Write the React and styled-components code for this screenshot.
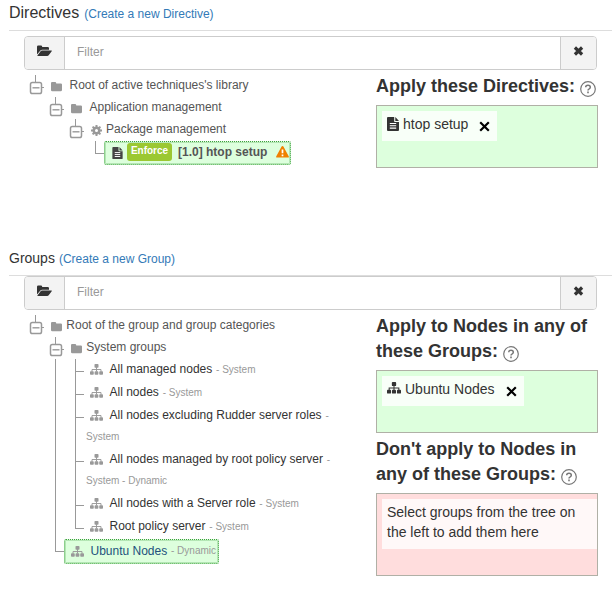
import React from 'react';
import styled, { createGlobalStyle, css } from 'styled-components';

const GlobalStyle = createGlobalStyle`
  * { box-sizing: border-box; }
  body {
    margin: 0;
    background: #fff;
    color: #333;
    font-family: "Liberation Sans", Arial, sans-serif;
    font-size: 12px;
    overflow: hidden;
  }
`;

const Page = styled.main`
  width: 612px;
  height: 589px;
  overflow: hidden;
`;

const Section = styled.section`
  height: ${(p) => p.$height}px;
`;

const SectionHeader = styled.header`
  display: flex;
  align-items: baseline;
  gap: ${(p) => p.$gap}px;
  height: 31px;
  margin-left: 9px;
  padding-top: 4px;
  border-bottom: 1px solid #ddd;
`;

const SectionTitle = styled.h3`
  margin: 0;
  font-size: ${(p) => p.$size}px;
  line-height: 18px;
  font-weight: 400;
`;

const CreateLink = styled.a`
  color: #337ab7;
  font-size: 12px;
  line-height: 18px;
`;

const FilterBar = styled.div`
  display: flex;
  width: 573px;
  height: 34px;
  margin: ${(p) => p.$top}px 0 0 24px;
  border: 1px solid #ccc;
  border-radius: 4px;
  overflow: hidden;
`;

const FilterButton = styled.button`
  display: flex;
  align-items: center;
  justify-content: center;
  width: ${(p) => p.$width}px;
  padding: 0 0 4px;
  border: 0;
  background: #f3f3f3;
  color: #333;
`;

const FilterInput = styled.input`
  flex: 1;
  min-width: 0;
  padding: 0 12px 3px;
  border: solid #ccc;
  border-width: 0 1px;
  font: 12px "Liberation Sans", Arial, sans-serif;
  &::placeholder { color: #999; opacity: 1; }
`;

const Columns = styled.div`
  display: grid;
  grid-template-columns: 351px 222px;
  margin-left: 25px;
`;

const Tree = styled.div`
  display: flex;
  flex-direction: column;
  padding-top: 5px;
`;

const TreeRow = styled.div`
  display: flex;
  height: ${(p) => p.$height || 22}px;
`;

const vertical = 'linear-gradient(#999, #999) 10px 0 / 1px';
const tick = 'linear-gradient(#999, #999) 10px 12px / 9px 1px no-repeat';

const Guide = styled.span`
  flex: none;
  width: ${(p) => p.$width || 20}px;
  ${(p) => p.$kind === 'line' && css`background: ${vertical} 100% no-repeat;`}
  ${(p) => p.$kind === 'tee' && css`background: ${tick}, ${vertical} 100% no-repeat;`}
  ${(p) => p.$kind === 'corner' && css`background: ${tick}, ${vertical} 12px no-repeat;`}
  ${(p) => p.$kind === 'elbow' && css`
    background: linear-gradient(#999, #999) 10px 12px / 10px 1px no-repeat,
      ${vertical} 12px no-repeat;
  `}
`;

const Toggle = styled.span`
  display: flex;
  flex: none;
  width: 20px;
`;

const FolderLabel = styled.span`
  display: flex;
  align-items: center;
  height: 20px;
  color: #555;
  white-space: pre;
`;

const IconSlot = styled.span`
  display: flex;
  flex: none;
  align-items: center;
  width: ${(p) => p.$width}px;
  padding: ${(p) => p.$top || 0}px 0 0 ${(p) => p.$left || 0}px;
  color: ${(p) => p.$color || '#999'};
`;

const GroupLabel = styled.div`
  padding-left: 1px;
  line-height: 21px;
  white-space: nowrap;
`;

const GroupLine = styled.div`
  display: flex;
  align-items: center;
  height: 21px;
`;

const GroupType = styled.span`
  margin-left: ${(p) => (p.$inline ? 1 : 0)}px;
  color: #999;
  font-size: 10px;
  white-space: pre;
`;

const Selected = styled.div`
  display: flex;
  align-items: center;
  width: ${(p) => p.$width}px;
  height: ${(p) => p.$height}px;
  padding-bottom: 2px;
  border: 1px dotted #3f9f3f;
  border-radius: 2px;
  background: #dfd;
  box-shadow: inset 0 0 0 1px #b4e6b4;
  white-space: pre;
`;

const PolicyBadge = styled.span`
  flex: none;
  width: 45px;
  height: 18px;
  margin-right: 6px;
  border-radius: 3px;
  background: #9bc832;
  color: #fff;
  font-size: 10px;
  font-weight: 700;
  line-height: 15px;
  text-align: center;
`;

const DirectiveName = styled.b`
  flex: none;
  width: 97.5px;
  color: #555;
`;

const GroupName = styled.span`
  color: #23527c;
`;

const Targets = styled.aside`
  padding-top: 4px;
`;

const TargetTitle = styled.h4`
  margin: ${(p) => p.$top || 0}px 0 6px;
  font-size: 18px;
  line-height: 25px;
  white-space: nowrap;
`;

const TitleLine = styled.span`
  display: flex;
  height: 25px;
  gap: 5px;
`;

const HelpSlot = styled.span`
  display: flex;
  padding-top: 7px;
`;

const DropArea = styled.div`
  height: ${(p) => p.$height}px;
  padding: 5px 0 0 5px;
  border: 1px solid #b0b0a6;
  background: ${(p) => (p.$excluded ? '#fdd' : '#dfd')};
`;

const Chip = styled.div`
  display: flex;
  width: ${(p) => p.$width}px;
  height: 30px;
  padding: 3px 5px;
  background: rgba(255, 255, 255, 0.8);
  font-size: 14px;
  line-height: 20px;
`;

const ChipName = styled.span`
  flex: 1;
  white-space: nowrap;
`;

const ChipIcon = styled.span`
  display: flex;
  flex: none;
  width: ${(p) => p.$width}px;
  padding-top: ${(p) => p.$top || 3}px;
`;

const RemoveButton = styled.span`
  display: flex;
  padding: 7px 2px 0 0;
`;

const EmptyHint = styled.p`
  height: 50px;
  margin: 0;
  padding: 3px 5px;
  background: rgba(255, 255, 255, 0.8);
  font-size: 14px;
  line-height: 20px;
`;

const FolderOpenIcon = () => (
  <svg width="15" height="12" viewBox="0 0 15 12" fill="currentColor">
    <path d="M0 9.5V1.7Q0 .5 1.2.5H4q1 0 1.2 1.2v.3h5.6Q12 2 12 3.3v1.4H5.1q-1 0-1.7.8L0 9.5Z" />
    <path d="M5 5.5h9.3q1 0 .4.8l-3 4q-.6.8-1.5.8H1q-1 0-.4-.8l3-4q.6-.8 1.4-.8Z" />
  </svg>
);

const CrossIcon = () => (
  <svg width="11" height="10" viewBox="0 0 11 10">
    <path d="M1.9 1.5 9.1 8.5M9.1 1.5 1.9 8.5" stroke="currentColor" strokeWidth="3.2" />
  </svg>
);

const FolderIcon = () => (
  <svg width="11" height="10" viewBox="0 0 11 10" fill="currentColor">
    <path d="M1.1 0h3q1 0 1.1 1v.4h4.600Q11 1.400 11 2.600v5.200Q11 9.300 9.700 9.300H1.300Q0 9.300 0 8V1.100Q0 0 1.100 0Z" />
  </svg>
);

const ToggleIcon = () => (
  <svg width="20" height="22" viewBox="0 0 20 22" fill="none" stroke="#999">
    <path d="M10.5 0v7M17 12.5h2" />
    <rect x="5.500" y="7.500" width="11" height="11" rx="1.800" strokeWidth="1.500" />
    <path d="M7.500 12.800h7" strokeWidth="1.400" />
  </svg>
);

const GearIcon = () => (
  <svg width="11" height="11" viewBox="0 0 22 22" fill="none" stroke="currentColor">
    <circle cx="11" cy="11" r="5.5" strokeWidth="5" />
    <path
      d="M11 0v4M11 18v4M0 11h4M18 11h4M3.2 3.2l3 3M15.8 15.8l3 3M18.8 3.2l-3 3M6.2 15.8l-3 3"
      strokeWidth="4"
    />
  </svg>
);

const SitemapIcon = ({ size = 13 }) => (
  <svg width={size} height={size * 0.85} viewBox="0 0 26 22" fill="currentColor">
    <rect x="9" y="0" width="8" height="7.5" rx="1.6" />
    <rect x="0" y="14.5" width="7.5" height="7" rx="1.6" />
    <rect x="9.2" y="14.5" width="7.5" height="7" rx="1.6" />
    <rect x="18.5" y="14.5" width="7.5" height="7" rx="1.6" />
    <path d="M13 6v9M4 15v-4h18v4" fill="none" stroke="currentColor" strokeWidth="1.9" />
  </svg>
);

const FileIcon = ({ width, height }) => (
  <svg width={width} height={height} viewBox="0 0 12 14">
    <path
      d="M1 0h6.200v4.200q0 .9.9.9H12V13q0 1-1 1H1q-1 0-1-1V1q0-1 1-1ZM8.300 0 12 4H8.300Z"
      fill="currentColor"
    />
    <path d="M2.800 6.500h6.400M2.800 8.800h6.400M2.800 11.100h6.400" stroke="#fff" strokeWidth="1.100" />
  </svg>
);

const WarningIcon = () => (
  <svg width="13" height="12" viewBox="0 0 13 12">
    <path d="M6.5 0q.6 0 .9.6l5.3 9.7q.6 1.2-.7 1.3H1Q-.3 11.5.3 10.3L5.6.6Q5.9 0 6.5 0Z" fill="#f08000" />
    <path d="M6.5 3.5v3.8M6.5 8.5v1.7" stroke="#fff" strokeWidth="1.7" />
  </svg>
);

const HelpIcon = () => (
  <svg width="16" height="16" viewBox="0 0 16 16" fill="none" stroke="#777">
    <circle cx="8" cy="8" r="7.3" strokeWidth="1.2" />
    <path d="M5.7 6.3Q5.7 4.3 8 4.3T10.3 6.2Q10.3 7.2 9.2 7.8Q8 8.4 8 9.4" strokeWidth="1.5" />
    <path d="M8 10.5v1.7" strokeWidth="1.6" />
  </svg>
);

const RemoveIcon = () => (
  <svg width="11" height="11" viewBox="0 0 11 11">
    <path d="M1.2 1.2 9.8 9.8M9.8 1.2 1.2 9.8" stroke="#000" strokeWidth="2.2" />
  </svg>
);

function Filter({ top }) {
  return (
    <FilterBar $top={top}>
      <FilterButton $width={39} aria-label="Open all"><FolderOpenIcon /></FilterButton>
      <FilterInput placeholder="Filter" />
      <FilterButton $width={35} aria-label="Clear filter"><CrossIcon /></FilterButton>
    </FilterBar>
  );
}

function Folder({ depth, label, gap = 18.5, icon = <FolderIcon /> }) {
  return (
    <TreeRow>
      {Array.from({ length: depth }, (_, i) => <Guide key={i} />)}
      <Toggle><ToggleIcon /></Toggle>
      <FolderLabel>
        <IconSlot $width={gap + 6} $left={5.5} $top={3}>{icon}</IconSlot>
        {label}
      </FolderLabel>
    </TreeRow>
  );
}

function Group({ name, type, wrapped, last }) {
  return (
    <TreeRow $height={wrapped ? 44 : 23}>
      <Guide />
      <Guide $kind="line" />
      <Guide $kind={last ? 'corner' : 'tee'} />
      <GroupLabel>
        <GroupLine>
          <IconSlot $width={23.5} $left={4} $top={1}><SitemapIcon /></IconSlot>
          {name}
          <GroupType $inline>{wrapped ? ' -' : ` - ${type}`}</GroupType>
        </GroupLine>
        {wrapped && <GroupLine><GroupType>{type}</GroupType></GroupLine>}
      </GroupLabel>
    </TreeRow>
  );
}

function Help() {
  return <HelpSlot><HelpIcon /></HelpSlot>;
}

const groups = [
  { name: 'All managed nodes', type: 'System' },
  { name: 'All nodes', type: 'System' },
  { name: 'All nodes excluding Rudder server roles', type: 'System', wrapped: true },
  { name: 'All nodes managed by root policy server', type: 'System - Dynamic', wrapped: true },
  { name: 'All nodes with a Server role', type: 'System' },
  { name: 'Root policy server', type: 'System', last: true },
];

export default function App() {
  return (
    <Page>
      <GlobalStyle />
      <Section $height={245}>
        <SectionHeader $gap={5}>
          <SectionTitle $size={16}>Directives</SectionTitle>
          <CreateLink>(Create a new Directive)</CreateLink>
        </SectionHeader>
        <Filter top={5} />
        <Columns>
          <Tree>
            <Folder depth={0} label="Root of active techniques's library" />
            <Folder depth={1} label="Application management" />
            <Folder depth={2} label="Package management" gap={15} icon={<GearIcon />} />
            <TreeRow $height={25}>
              <Guide /><Guide /><Guide />
              <Guide $kind="elbow" $width={19} />
              <Selected $width={187} $height={24}>
                <IconSlot $width={22} $left={7} $top={2} $color="#444"><FileIcon width={11} height={12} /></IconSlot>
                <PolicyBadge>Enforce</PolicyBadge>
                <DirectiveName>[1.0] htop setup</DirectiveName>
                <WarningIcon />
              </Selected>
            </TreeRow>
          </Tree>
          <Targets>
            <TargetTitle>
              <TitleLine>Apply these Directives:<Help /></TitleLine>
            </TargetTitle>
            <DropArea $height={63}>
              <Chip $width={115}>
                <ChipIcon $width={16}><FileIcon width={12} height={14} /></ChipIcon>
                <ChipName>htop setup</ChipName>
                <RemoveButton><RemoveIcon /></RemoveButton>
              </Chip>
            </DropArea>
          </Targets>
        </Columns>
      </Section>

      <Section $height={344}>
        <SectionHeader $gap={4}>
          <SectionTitle $size={14}>Groups</SectionTitle>
          <CreateLink>(Create a new Group)</CreateLink>
        </SectionHeader>
        <Filter top={0} />
        <Columns>
          <Tree>
            <Folder depth={0} label="Root of the group and group categories" gap={15.3} />
            <Folder depth={1} label="System groups" gap={15.3} />
            {groups.map((group) => <Group key={group.name} {...group} />)}
            <TreeRow $height={25}>
              <Guide />
              <Guide $kind="elbow" $width={19} />
              <Selected $width={155} $height={25}>
                <IconSlot $width={25.5} $left={6} $top={2}><SitemapIcon /></IconSlot>
                <GroupName>Ubuntu Nodes</GroupName>
                <GroupType $inline> - Dynamic</GroupType>
              </Selected>
            </TreeRow>
          </Tree>
          <Targets>
            <TargetTitle>
              <TitleLine>Apply to Nodes in any of</TitleLine>
              <TitleLine>these Groups:<Help /></TitleLine>
            </TargetTitle>
            <DropArea $height={63}>
              <Chip $width={142}>
                <ChipIcon $width={18}><SitemapIcon size={14} /></ChipIcon>
                <ChipName>Ubuntu Nodes</ChipName>
                <RemoveButton><RemoveIcon /></RemoveButton>
              </Chip>
            </DropArea>
            <TargetTitle $top={4}>
              <TitleLine>Don't apply to Nodes in</TitleLine>
              <TitleLine>any of these Groups:<Help /></TitleLine>
            </TargetTitle>
            <DropArea $height={83} $excluded>
              <EmptyHint>Select groups from the tree on the left to add them here</EmptyHint>
            </DropArea>
          </Targets>
        </Columns>
      </Section>
    </Page>
  );
}
